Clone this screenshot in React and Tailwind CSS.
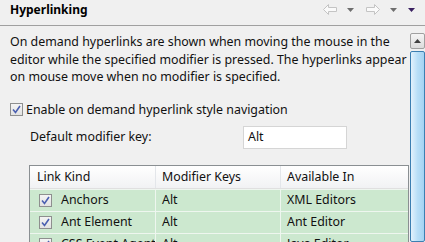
import React from "react";

const font = { fontFamily: '"Noto Sans", "Open Sans", sans-serif' };

function Check({ className = "" }) {
  return (
    <div className={"flex items-center justify-center bg-gradient-to-b from-[#f4f4f4] to-[#e2e2e2] border border-[#8e8f8f] " + className}>
      <svg width="9" height="9" viewBox="0 0 9 9">
        <path d="M1 4.5 L3.5 7.5 L8 1" fill="none" stroke="#4a5fb0" strokeWidth="1.6" />
      </svg>
    </div>
  );
}

function LeftArrow() {
  return (
    <svg width="14" height="11" viewBox="0 0 14 11">
      <path d="M0.5 5.5 L5.5 0.5 L5.5 3.5 L13.5 3.5 L13.5 7.5 L5.5 7.5 L5.5 10.5 Z" fill="#fafafa" stroke="#c4c4c4" />
    </svg>
  );
}
function RightArrow() {
  return (
    <svg width="14" height="11" viewBox="0 0 14 11">
      <path d="M13.5 5.5 L8.5 0.5 L8.5 3.5 L0.5 3.5 L0.5 7.5 L8.5 7.5 L8.5 10.5 Z" fill="#fafafa" stroke="#c4c4c4" />
    </svg>
  );
}
function Tri({ color }) {
  return (
    <svg width="7" height="4" viewBox="0 0 7 4">
      <path d="M0 0 L7 0 L3.5 4 Z" fill={color} />
    </svg>
  );
}

const rows = [
  ["Anchors", "Alt", "XML Editors"],
  ["Ant Element", "Alt", "Ant Editor"],
  ["CSS Event Agent", "Alt", "Java Editor"],
];

export default function App() {
  return (
    <div className="w-[425px] h-[242px] overflow-hidden bg-[#f0f0f0] flex flex-col text-[#111]" style={font}>
      <div className="h-[26px] shrink-0 flex items-center border-b border-[#a0a0a0] pl-[10px] pr-[10px]">
        <div className="text-[12px] font-bold text-black leading-none -mt-[6px]">Hyperlinking</div>
        <div className="ml-auto flex items-center -mt-[6px]">
          <LeftArrow />
          <div className="ml-[10px]"><Tri color="#6e6e6e" /></div>
          <div className="ml-[12px]"><RightArrow /></div>
          <div className="ml-[10px]"><Tri color="#6e6e6e" /></div>
          <div className="ml-[11px]"><Tri color="#3a2060" /></div>
        </div>
      </div>
      <div className="flex-1 flex min-h-0">
        <div className="flex-1 min-w-0 overflow-hidden text-[12.4px] whitespace-nowrap">
          <div className="pl-[10px] pt-[7px] leading-[17.5px]">
            <div>On demand hyperlinks are shown when moving the mouse in the</div>
            <div>editor while the specified modifier is pressed. The hyperlinks appear</div>
            <div>on mouse move when no modifier is specified.</div>
          </div>
          <div className="flex items-center pl-[10px] mt-[15px]">
            <Check className="w-[13px] h-[13px]" />
            <span className="ml-[3px]">Enable on demand hyperlink style navigation</span>
          </div>
          <div className="flex items-center pl-[30px] mt-[7px]">
            <span className="w-[213px]">Default modifier key:</span>
            <div className="w-[104px] h-[23px] bg-white border border-[#d5d5d5] flex items-center pl-[4px]">Alt</div>
          </div>
          <div className="ml-[29px] mt-[16px] w-[380px] border border-[#8a8f92] bg-white">
            <div className="flex h-[23px] bg-gradient-to-b from-white to-[#f1f2f4] border-b border-[#e0e0e0]">
              <div className="w-[126px] pl-[7px] flex items-center border-r border-[#e3e6ea]">Link Kind</div>
              <div className="w-[125px] pl-[6px] flex items-center border-r border-[#e3e6ea]">Modifier Keys</div>
              <div className="flex-1 pl-[6px] flex items-center">Available In</div>
            </div>
            {rows.map((r) => (
              <div key={r[0]} className="flex h-[22px] bg-[#cce8cf] border-t border-[#eef6ef]">
                <div className="w-[126px] pl-[9px] flex items-center border-r border-[#eef6ef] overflow-hidden">
                  <Check className="w-[13px] h-[13px] shrink-0" />
                  <span className="ml-[9px]">{r[0]}</span>
                </div>
                <div className="w-[125px] pl-[6px] flex items-center border-r border-[#eef6ef]">{r[1]}</div>
                <div className="flex-1 pl-[6px] flex items-center">{r[2]}</div>
              </div>
            ))}
          </div>
        </div>
        <div className="w-[15px] shrink-0 flex flex-col pt-[7px]">
          <div className="h-[16px] border border-[#a0a0a0] rounded-[2px] bg-gradient-to-b from-[#f5f5f5] to-[#dcdcdc] flex items-center justify-center">
            <svg width="7" height="4" viewBox="0 0 7 4"><path d="M0 4 L7 4 L3.5 0 Z" fill="#404040" /></svg>
          </div>
          <div className="flex-1 mt-[2px] border border-[#3c7fb1] rounded-[2px] bg-gradient-to-r from-[#e3f2fc] via-[#b9dff7] to-[#a4d3f2]" />
        </div>
      </div>
    </div>
  );
}
